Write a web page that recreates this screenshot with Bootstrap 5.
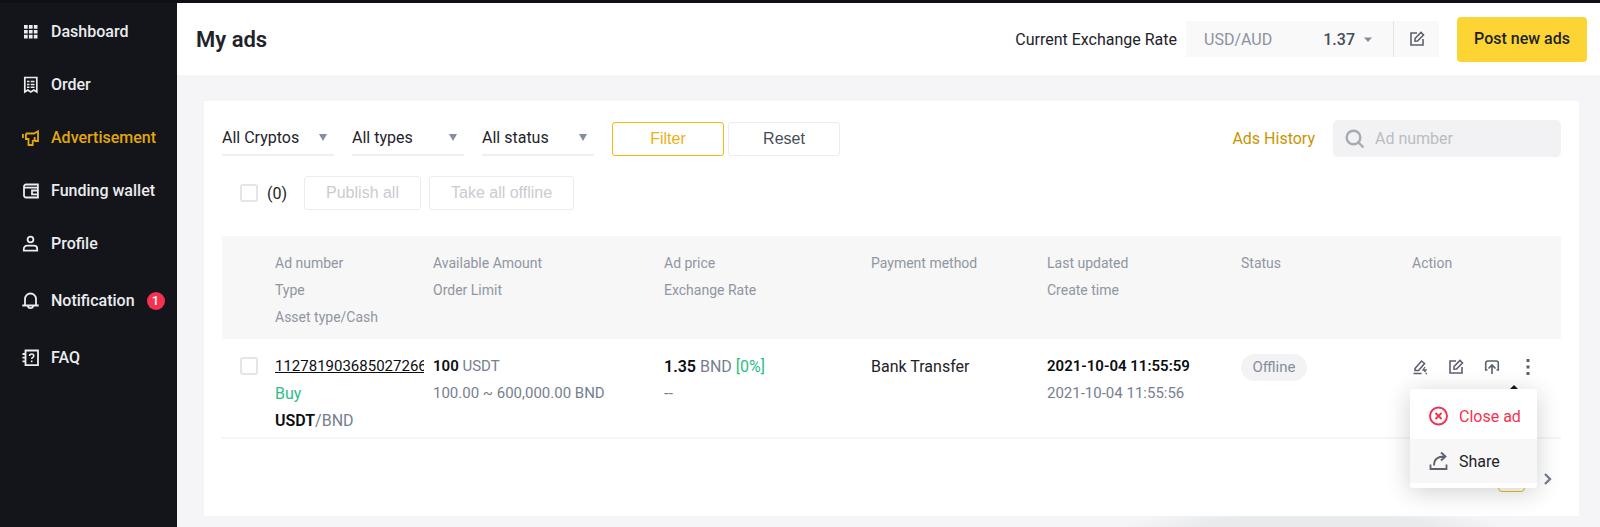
<!DOCTYPE html>
<html lang="en">
<head>
<meta charset="utf-8">
<meta name="viewport" content="width=device-width, initial-scale=1">
<title>My ads</title>
<link href="https://cdn.jsdelivr.net/npm/bootstrap@5.3.0/dist/css/bootstrap.min.css" rel="stylesheet">
<style>
  :root { --ink: #1e2329; --muted-ink: #76808f; --gold: #f0b90b; --gold-ink: #c99400; --green: #2ebd85; --red: #f6304f; }
  body { font-family: Roboto, "Liberation Sans", sans-serif; font-size: 16px; line-height: 27px; color: var(--ink); background: #f5f5f7; }
  svg { display: block; flex: none; fill: none; stroke: currentColor; }
  svg.solid { fill: currentColor; stroke: none; }
  .shell { border-top: 3px solid #0d1014; }
  .side { width: 177px; background: #14151a; color: #eaecef; padding: 14px 0 0 22px; }
  .side a { color: inherit; text-decoration: none; font-weight: 500; gap: 12px; height: 29px; margin-bottom: 24px; display: flex; align-items: center; white-space: nowrap; }
  .side li:nth-child(n+5) a { margin-bottom: 28px; }
  .side a.active { color: #e0a80d; }
  .count { width: 18px; height: 18px; font-size: 13px; line-height: 18px; background: var(--red); color: #fff; }
  main { background: radial-gradient(ellipse 190px 20px at 80% 100%, #e9eaec 60%, transparent) no-repeat; }
  .topbar { height: 72px; background: #fff; padding: 0 13px 0 19px; }
  .topbar h1 { font-size: 22px; line-height: 30px; font-weight: 600; padding-top: 2px; }
  .rate { height: 36px; background: #f9f9f9; margin: 0 18px 0 9px; }
  .rate-pair { width: 207px; padding: 0 20px 0 18px; border: 0; background: none; color: #8b929e; }
  .rate-pair b { font-weight: 500; color: #474d57; }
  .rate-pair svg { color: #848e9c; }
  .rate-edit { width: 46px; border: 0; border-left: 1px solid #e4e5e8; background: none; color: #5b626e; padding: 0 0 0 15px; }
  .btn-post { width: 130px; height: 45px; padding: 0; background: #fcd535; border-radius: 4px; font-weight: 500; color: var(--ink); }
  .panel { margin: 26px 21px 11px 27px; background: #fff; padding: 19px 18px 24px; }
  .pick { width: 112px; height: 35px; padding: 0; margin-right: 18px; border: 0; border-bottom: 2px solid #eff0f2; border-radius: 0; color: var(--ink); appearance: none; line-height: 27px;
    background: url("data:image/svg+xml,%3Csvg xmlns='http://www.w3.org/2000/svg' width='8' height='7'%3E%3Cpath d='M0 0h8L4 7z' fill='%23848e9c'/%3E%3C/svg%3E") no-repeat right 7px top 13px; }
  .btn-flat { height: 34px; padding: 0 21px; border: 1px solid #eaecef; border-radius: 3px; font: 16px/30px "Liberation Sans", sans-serif; color: #474d57; background: #fff; }
  .btn-flat.wide { width: 112px; padding: 0; }
  .btn-flat.gold { border-color: var(--gold); color: #efb012; margin-right: 4px; }
  .btn-flat:disabled { opacity: 1; color: #c9ccd1; border-color: #eaecef; background: #fff; }
  .history { color: var(--gold-ink); text-decoration: none; margin-right: 18px; }
  .finder { width: 228px; height: 37px; background: #f2f2f4; border-radius: 5px; padding: 0 12px; gap: 10px; color: #a5abb4; }
  .finder input { min-width: 0; border: 0; background: none; outline: 0; padding: 0; }
  .finder input::placeholder { color: #b9bdc3; }
  .bulk { margin: 19px 0 26px 18px; }
  .bulk label { margin: 0 17px 0 9px; }
  .tick { appearance: none; display: block; width: 18px; height: 18px; margin: 0; border: 2px solid #e3e5e8; border-radius: 3px; background: #fff; }
  .ads { width: 100%; table-layout: fixed; border-bottom: 2px solid #f5f5f6; }
  .c-tick { width: 53px; } .c-number { width: 158px; } .c-amount { width: 231px; } .c-price { width: 207px; }
  .c-pay { width: 176px; } .c-time { width: 194px; } .c-status { width: 171px; } .c-action { width: 149px; }
  .ads th { background: #f7f7f7; color: #8f96a1; font-size: 14px; font-weight: 400; padding: 14px 0 8px; vertical-align: top; }
  .ads td { padding: 14px 0 3px; vertical-align: top; color: var(--muted-ink); }
  .ads td.figures, .adno { font-size: 15px; }
  .ads td.plain { color: var(--ink); }
  .ads .tick { margin: 4px 0 0 18px; }
  .ads b { color: #0b0e11; font-weight: 600; }
  .up { color: var(--green); }
  .adno { display: block; width: 149px; overflow: hidden; white-space: nowrap; color: #0b0e11; }
  .state { display: inline-block; width: 66px; border-radius: 14px; background: #f3f3f5; font-size: 15px; text-align: center; color: #868e9b; }
  .acts { gap: 20px; height: 27px; }
  .act { border: 0; background: none; padding: 0; color: #5b626e; }
  .more { left: -2px; top: 36px; width: 127px; background: #fff; border-radius: 3px; padding: 4px 0 5px; box-shadow: 0 4px 24px rgba(20, 25, 35, .2); z-index: 2; }
  .more::before { content: ""; position: absolute; right: 19px; top: -4px; border: 4px solid transparent; border-top: 0; border-bottom-color: #14151a; }
  .more button { width: 100%; height: 46px; border: 0; background: #fff; padding: 0 0 0 19px; gap: 11px; color: var(--ink); }
  .more button.close-ad { color: var(--red); }
  .more button.hovered { height: 44px; background: #f7f7f7; }
  .hovered svg { color: #5b626e; }
  .pages { margin: 26px 8px 0 0; gap: 18px; }
  .pages button { border: 0; background: none; padding: 0; color: #76808f; }
  .pages .now { width: 27px; height: 27px; border: 1px solid var(--gold); border-radius: 4px; font-size: 14px; line-height: 24px; color: var(--gold); }
</style>
</head>
<body>
<div class="shell d-flex min-vh-100">
  <nav class="side flex-shrink-0" aria-label="Main">
    <ul class="list-unstyled mb-0">
      <li><a href="#"><svg class="solid" width="17" height="18" viewBox="0 0 17 18"><path d="M2 2h3.700v3.700H2zM6.900 2h3.700v3.700H6.900zM11.800 2h3.700v3.700h-3.700zM2 6.900h3.700v3.700H2zM6.900 6.900h3.700v3.700H6.900zM11.800 6.900h3.700v3.700h-3.700zM2 11.800h3.700v3.700H2zM6.900 11.800h3.700v3.700H6.900zM11.800 11.800h3.700v3.700h-3.700z"/></svg>Dashboard</a></li>
      <li><a href="#"><svg width="17" height="18" viewBox="0 0 17 18" stroke-width="1.700"><path d="M2.800 1.500h12V16l-3-2-3 2-3-2-3 2z"/><path d="M5 5.500h2.500M8.700 5.500h3.800M5 8.500h2.500M8.700 8.500h3.800M5 11.300h2.500M8.700 11.300h3.800" stroke-width="1.500"/></svg>Order</a></li>
      <li><a href="#" class="active"><svg width="17" height="18" viewBox="0 0 17 18" stroke-width="1.800"><path d="M.9 5v4M3.900 4.500H12l4-2.200V12h-3.500M3.900 4.500V10H6.500v6h4.200v-4.200l2-.8V8"/></svg>Advertisement</a></li>
      <li><a href="#"><svg width="17" height="18" viewBox="0 0 17 18" stroke-width="1.800"><path d="M15.900 5.500V15.500H4a2 2 0 0 1-2-2V4.500a2 2 0 0 1 2-2h11.900v3.200H2.500M15.900 8.500H10V12.300h5.900"/></svg>Funding wallet</a></li>
      <li><a href="#"><svg width="17" height="18" viewBox="0 0 17 18" stroke-width="1.800"><circle cx="8.500" cy="4.500" r="2.900"/><path d="M1.800 15.700v-1.800a3.200 3.200 0 0 1 3.200-3.200h7a3.200 3.200 0 0 1 3.200 3.200v1.800z"/></svg>Profile</a></li>
      <li><a href="#"><svg width="17" height="18" viewBox="0 0 17 18" stroke-width="1.800"><path d="M3 13V7a5.500 5.500 0 0 1 11 0v6M.3 13.500h16.400M5.800 14.500a2.800 2.300 0 0 0 5.400 0"/></svg>Notification<span class="count rounded-circle text-center">1</span></a></li>
      <li><a href="#"><svg width="17" height="18" viewBox="0 0 17 18" stroke-width="1.800"><path d="M3.500 1.500H16v14.600H3.500zM.5 5h3M.5 8.700h3M.5 12.400h3"/><path d="M7.600 7c0-2.700 4.200-2.700 4.200 0 0 1.500-2.100 1.200-2.100 3M9.700 11.500v1.800" stroke-width="1.600"/></svg>FAQ</a></li>
    </ul>
  </nav>

  <main class="flex-grow-1">
    <header class="topbar d-flex align-items-center">
      <h1 class="mb-0 me-auto">My ads</h1>
      <span>Current Exchange Rate</span>
      <div class="rate d-flex">
        <button type="button" class="rate-pair d-flex align-items-center"><span class="me-auto">USD/AUD</span><b>1.37</b><svg class="solid ms-2" width="10" height="7" viewBox="0 0 10 7"><path d="M1 1.500h8L5 6z"/></svg></button>
        <button type="button" class="rate-edit" aria-label="Edit rate"><svg width="16" height="16" viewBox="0 0 16 16" stroke-width="1.600"><path d="M8 2H2v12h12V8"/><path d="M6 7.500 12 1.500l2.500 2.500-6 6L6 10.200z"/></svg></button>
      </div>
      <button type="button" class="btn btn-post">Post new ads</button>
    </header>

    <section class="panel">
      <div class="d-flex align-items-center">
        <select class="pick" aria-label="Crypto"><option>All Cryptos</option></select>
        <select class="pick" aria-label="Type"><option>All types</option></select>
        <select class="pick" aria-label="Status"><option>All status</option></select>
        <button type="button" class="btn-flat wide gold">Filter</button>
        <button type="button" class="btn-flat wide me-auto">Reset</button>
        <a class="history" href="#">Ads History</a>
        <label class="finder d-flex align-items-center"><svg width="20" height="20" viewBox="0 0 20 20" stroke-width="2.400"><circle cx="8.500" cy="8.500" r="6.800"/><path d="m13.500 13.500 5 5"/></svg><input type="search" class="flex-grow-1" placeholder="Ad number" aria-label="Ad number"></label>
      </div>

      <div class="bulk d-flex align-items-center">
        <input type="checkbox" class="tick" id="all"><label for="all">(0)</label>
        <button type="button" class="btn-flat" disabled>Publish all</button>
        <button type="button" class="btn-flat ms-2" disabled>Take all offline</button>
      </div>

      <table class="ads">
        <colgroup><col class="c-tick"><col class="c-number"><col class="c-amount"><col class="c-price"><col class="c-pay"><col class="c-time"><col class="c-status"><col class="c-action"></colgroup>
        <thead>
          <tr><th></th><th>Ad number<br>Type<br>Asset type/Cash</th><th>Available Amount<br>Order Limit</th><th>Ad price<br>Exchange Rate</th><th>Payment method</th><th>Last updated<br>Create time</th><th>Status</th><th>Action</th></tr>
        </thead>
        <tbody>
          <tr>
            <td><input type="checkbox" class="tick" aria-label="Select ad"></td>
            <td><a class="adno" href="#">112781903685027266</a><span class="up">Buy</span><br><b>USDT</b>/BND</td>
            <td class="figures"><b>100</b> USDT<br>100.00 ~ 600,000.00 BND</td>
            <td><b>1.35</b> BND <span class="up">[0%]</span><br>--</td>
            <td class="plain">Bank Transfer</td>
            <td class="figures"><b>2021-10-04 11:55:59</b><br>2021-10-04 11:55:56</td>
            <td><span class="state">Offline</span></td>
            <td>
              <div class="acts position-relative d-flex align-items-center">
                <button type="button" class="act" aria-label="Edit price"><svg width="16" height="16" viewBox="0 0 16 16" stroke-width="1.600"><path d="M3 9.500 9.500 2l3 2.500-6 7H3zM1.500 14.500h8"/><path d="m13 8-2 3h3l-1.500 2M13.500 14.500h1.500" stroke-width="1.300"/></svg></button>
                <button type="button" class="act" aria-label="Edit ad"><svg width="16" height="16" viewBox="0 0 16 16" stroke-width="1.600"><path d="M8 2H2v12h12V8"/><path d="M6 7.500 12 1.500l2.500 2.500-6 6L6 10.200z"/></svg></button>
                <button type="button" class="act" aria-label="Publish"><svg width="16" height="16" viewBox="0 0 16 16" stroke-width="1.600"><path d="M3.500 11H1.700V4a2 2 0 0 1 2-2h8.600a2 2 0 0 1 2 2v7h-1.800M8 15V6M4.500 9.500 8 6l3.500 3.500"/></svg></button>
                <button type="button" class="act" aria-label="More"><svg class="solid" width="16" height="16" viewBox="0 0 16 16"><path d="M6.500 0h3v3h-3zM6.500 6.500h3v3h-3zM6.500 13h3v3h-3z"/></svg></button>
                <div class="more position-absolute">
                  <button type="button" class="close-ad d-flex align-items-center"><svg width="19" height="20" viewBox="0 0 19 20" stroke-width="1.900"><circle cx="9.500" cy="10" r="8.500"/><path d="m6.500 7 6 6m0-6-6 6"/></svg>Close ad</button>
                  <button type="button" class="hovered d-flex align-items-center"><svg width="19" height="20" viewBox="0 0 19 20" stroke-width="1.800"><path d="M1.500 13.500V18h16v-4.500M5 14.500c0-6 3-9 11-9M12 1.500l4.500 4-4.500 4"/></svg>Share</button>
                </div>
              </div>
            </td>
          </tr>
        </tbody>
      </table>

      <div class="pages d-flex justify-content-end align-items-center">
        <button type="button" class="now">1</button>
        <button type="button" aria-label="Next page"><svg width="10" height="14" viewBox="0 0 10 14" stroke-width="2.400"><path d="m2 2 5 5-5 5"/></svg></button>
      </div>
    </section>
  </main>
</div>
<script src="https://cdn.jsdelivr.net/npm/bootstrap@5.3.0/dist/js/bootstrap.bundle.min.js"></script>
</body>
</html>
